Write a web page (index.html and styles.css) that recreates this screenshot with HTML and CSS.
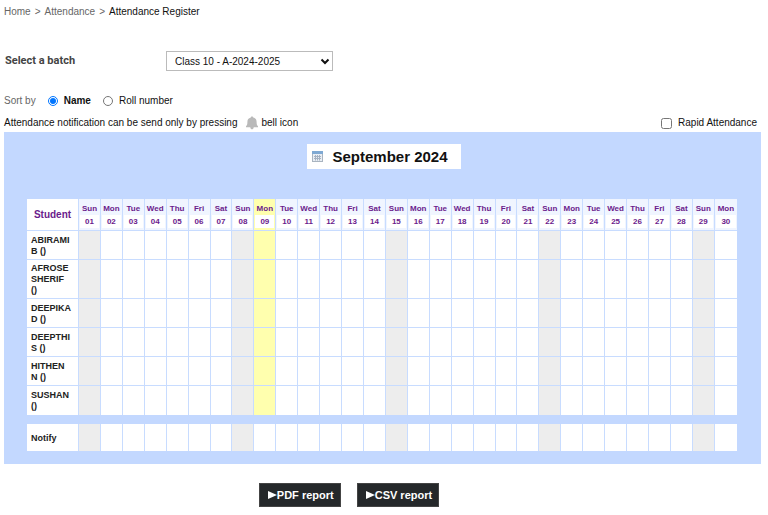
FILE: index.html
```html
<!DOCTYPE html>
<html lang="en">
<head>
    <meta charset="UTF-8">
    <meta name="viewport" content="width=device-width, initial-scale=1.0">
    <title>Attendance Register</title>
    <link rel="stylesheet" href="styles.css">
</head>
<body>
    <nav class="breadcrumb">
        <a href="#">Home</a>
        <span>&gt;</span>
        <a href="#">Attendance</a>
        <span>&gt;</span>
        <a href="#" class="current">Attendance Register</a>
    </nav>

    <div class="batch">
        <label for="batch">Select a batch</label>
        <div class="select-box">
            <select id="batch">
                <option>Class 10 - A-2024-2025</option>
            </select>
            <svg class="arrow" width="10" height="7" viewBox="0 0 10 7"><path d="M1.5 1.5 L5 5 L8.5 1.5" fill="none" stroke="#111" stroke-width="2"/></svg>
        </div>
    </div>

    <div class="sort">
        <span class="sort-title">Sort by</span>
        <input type="radio" name="sort" id="sort-name" checked>
        <label for="sort-name" class="bold">Name</label>
        <input type="radio" name="sort" id="sort-roll">
        <label for="sort-roll">Roll number</label>
    </div>

    <div class="info">
        <span>Attendance notification can be send only by pressing</span>
        <svg class="bell" width="12" height="14" viewBox="0 0 12 14"><path d="M6 0.5 C6.8 0.5 7.2 1 7.2 1.6 C9.6 2.2 10.6 3.8 10.6 6 C10.6 8.5 11 9.3 12 10.3 V11.3 H0 V10.3 C1 9.3 1.4 8.5 1.4 6 C1.4 3.8 2.4 2.2 4.8 1.6 C4.8 1 5.2 0.5 6 0.5 Z M4.3 11.3 H7.7 C7.5 14 4.5 14 4.3 11.3 Z" fill="#b9b9b9"/></svg>
        <span>bell icon</span>
        <div class="rapid">
            <input type="checkbox" id="rapid">
            <label for="rapid">Rapid Attendance</label>
        </div>
    </div>

    <div class="panel">
        <div class="month-bar">
            <div class="month">
                <svg width="11" height="11" viewBox="0 0 11 11"><rect x="0.5" y="0.5" width="10" height="10" fill="#e9eef4" stroke="#a9b4c0"/><rect width="11" height="3" fill="#7fa9d3"/><path d="M2 5.5 H9 M2 7.5 H9 M3.5 4 V9.5 M5.5 4 V9.5 M7.5 4 V9.5" stroke="#a5b2c2" stroke-width="1"/></svg>
                <h1>September 2024</h1>
            </div>
        </div>
        <table class="register">
            <thead>
                <tr id="days"><th class="student">Student</th></tr>
            </thead>
            <tbody id="students"></tbody>
        </table>
        <table class="register notify">
            <tbody id="notify"></tbody>
        </table>
    </div>

    <div class="buttons">
        <button type="button"><svg width="9" height="8" viewBox="0 0 9 8"><path d="M0 0 L9 4 L0 8 Z" fill="#fff"/></svg>PDF report</button>
        <button type="button"><svg width="9" height="8" viewBox="0 0 9 8"><path d="M0 0 L9 4 L0 8 Z" fill="#fff"/></svg>CSV report</button>
    </div>

    <script>
        const names = ["ABIRAMI B ()", "AFROSE SHERIF ()", "DEEPIKA D ()", "DEEPTHI S ()", "HITHEN N ()", "SUSHAN ()"];
        const weekdays = ["Sun", "Mon", "Tue", "Wed", "Thu", "Fri", "Sat"];
        const today = 9;

        function dayClass(day) {
            if (day === today) return "today";
            return day % 7 === 1 ? "sunday" : "";
        }

        function buildRow(name) {
            let html = "<tr><th>" + name + "</th>";
            for (let day = 1; day <= 30; day++) {
                html += '<td class="' + dayClass(day) + '"></td>';
            }
            return html + "</tr>";
        }

        let header = "";
        for (let day = 1; day <= 30; day++) {
            header += '<th class="day ' + dayClass(day) + '"><div>' + weekdays[(day - 1) % 7] +
                '</div><div class="date">' + String(day).padStart(2, "0") + "</div></th>";
        }
        document.getElementById("days").innerHTML += header;
        document.getElementById("students").innerHTML = names.map(buildRow).join("");
        document.getElementById("notify").innerHTML = buildRow("Notify");
    </script>
</body>
</html>
```
FILE: styles.css
```css
* { box-sizing: border-box; }
body {
    margin: 0; padding: 5px 7px 0 4px; background: #fff; color: #111;
    font-family: "Liberation Sans", Arial, sans-serif; font-size: 10px; line-height: 14px;
}
.breadcrumb { display: flex; gap: 4px; color: #666; }
.breadcrumb a { color: #666; text-decoration: none; }
.breadcrumb .current { color: #111; }

.batch { display: flex; align-items: center; margin-top: 32px; }
.batch label {
    width: 162px; padding-left: 1px; color: #444; font-family: Roboto, sans-serif;
    font-size: 11px; font-weight: bold;
}
.select-box { position: relative; width: 167px; }
.select-box select {
    display: block; width: 100%; height: 20px; padding: 0 8px; appearance: none;
    border: 1px solid #bbb; border-radius: 0; background: #fff;
    color: #111; font-family: inherit; font-size: 10px;
}
.arrow { position: absolute; right: 3px; top: 7px; pointer-events: none; }

.sort { display: flex; align-items: center; margin-top: 23px; }
.sort-title { color: #666; margin-right: 12px; }
.sort input { width: 10px; height: 10px; margin: 0 6px 0 0; }
.sort label { margin-right: 12px; }
.bold { font-weight: bold; }

.info { display: flex; align-items: center; margin: 8px 4px 2px 0; }
.bell { margin: 0 4px 0 8px; }
.rapid { display: flex; align-items: center; gap: 6px; margin-left: auto; }
.rapid input { width: 11px; height: 11px; margin: 0; }

.panel { padding: 12px 24px 13px 23px; background: #c3d8ff; }
.month-bar { display: flex; justify-content: center; margin-bottom: 30px; padding-left: 4px; }
.month {
    display: flex; align-items: center; gap: 9px; height: 25px;
    padding: 0 13px 0 5px; background: #fff;
}
.month h1 { margin: 0; font-size: 15px; line-height: 25px; }

.register { width: 100%; table-layout: fixed; border-collapse: separate; border-spacing: 0; background: #fff; }
.register th, .register td { height: 29px; padding: 0; border: solid #c8dcff; border-width: 0 1px 1px 0; }
.register th {
    width: 52px; padding: 3px 6px 2px 4px; color: #222; font-size: 9px;
    line-height: 11px; text-align: left;
}
.register .student { padding: 0; color: #6b1b8c; font-size: 10px; text-align: center; }
.register .day {
    width: auto; height: 32px; padding: 3px 0 2px; background: #f0f5ff; color: #6b1b8c;
    font-size: 8px; line-height: 13px; text-align: center;
}
.register .date { margin: 0 1px; background: #fff; }
.register td.sunday { background: #ededed; }
.register .today, .register .day.today { background: #ffffae; }
.register tr > :last-child { border-right: 0; }
.register tbody tr:last-child > * { border-bottom: 0; }
.notify { margin-top: 9px; }
.notify th, .notify td { height: 27px; }
.notify .today { background: #fff; }

.buttons { display: flex; justify-content: center; gap: 16px; margin: 19px 67px 0 0; }
.buttons button {
    display: flex; align-items: center; height: 24px; padding: 0 6px 0 8px;
    border: 1px solid #444; background: #25282a; color: #fff;
    font-family: inherit; font-size: 11px; font-weight: bold;
}
```
